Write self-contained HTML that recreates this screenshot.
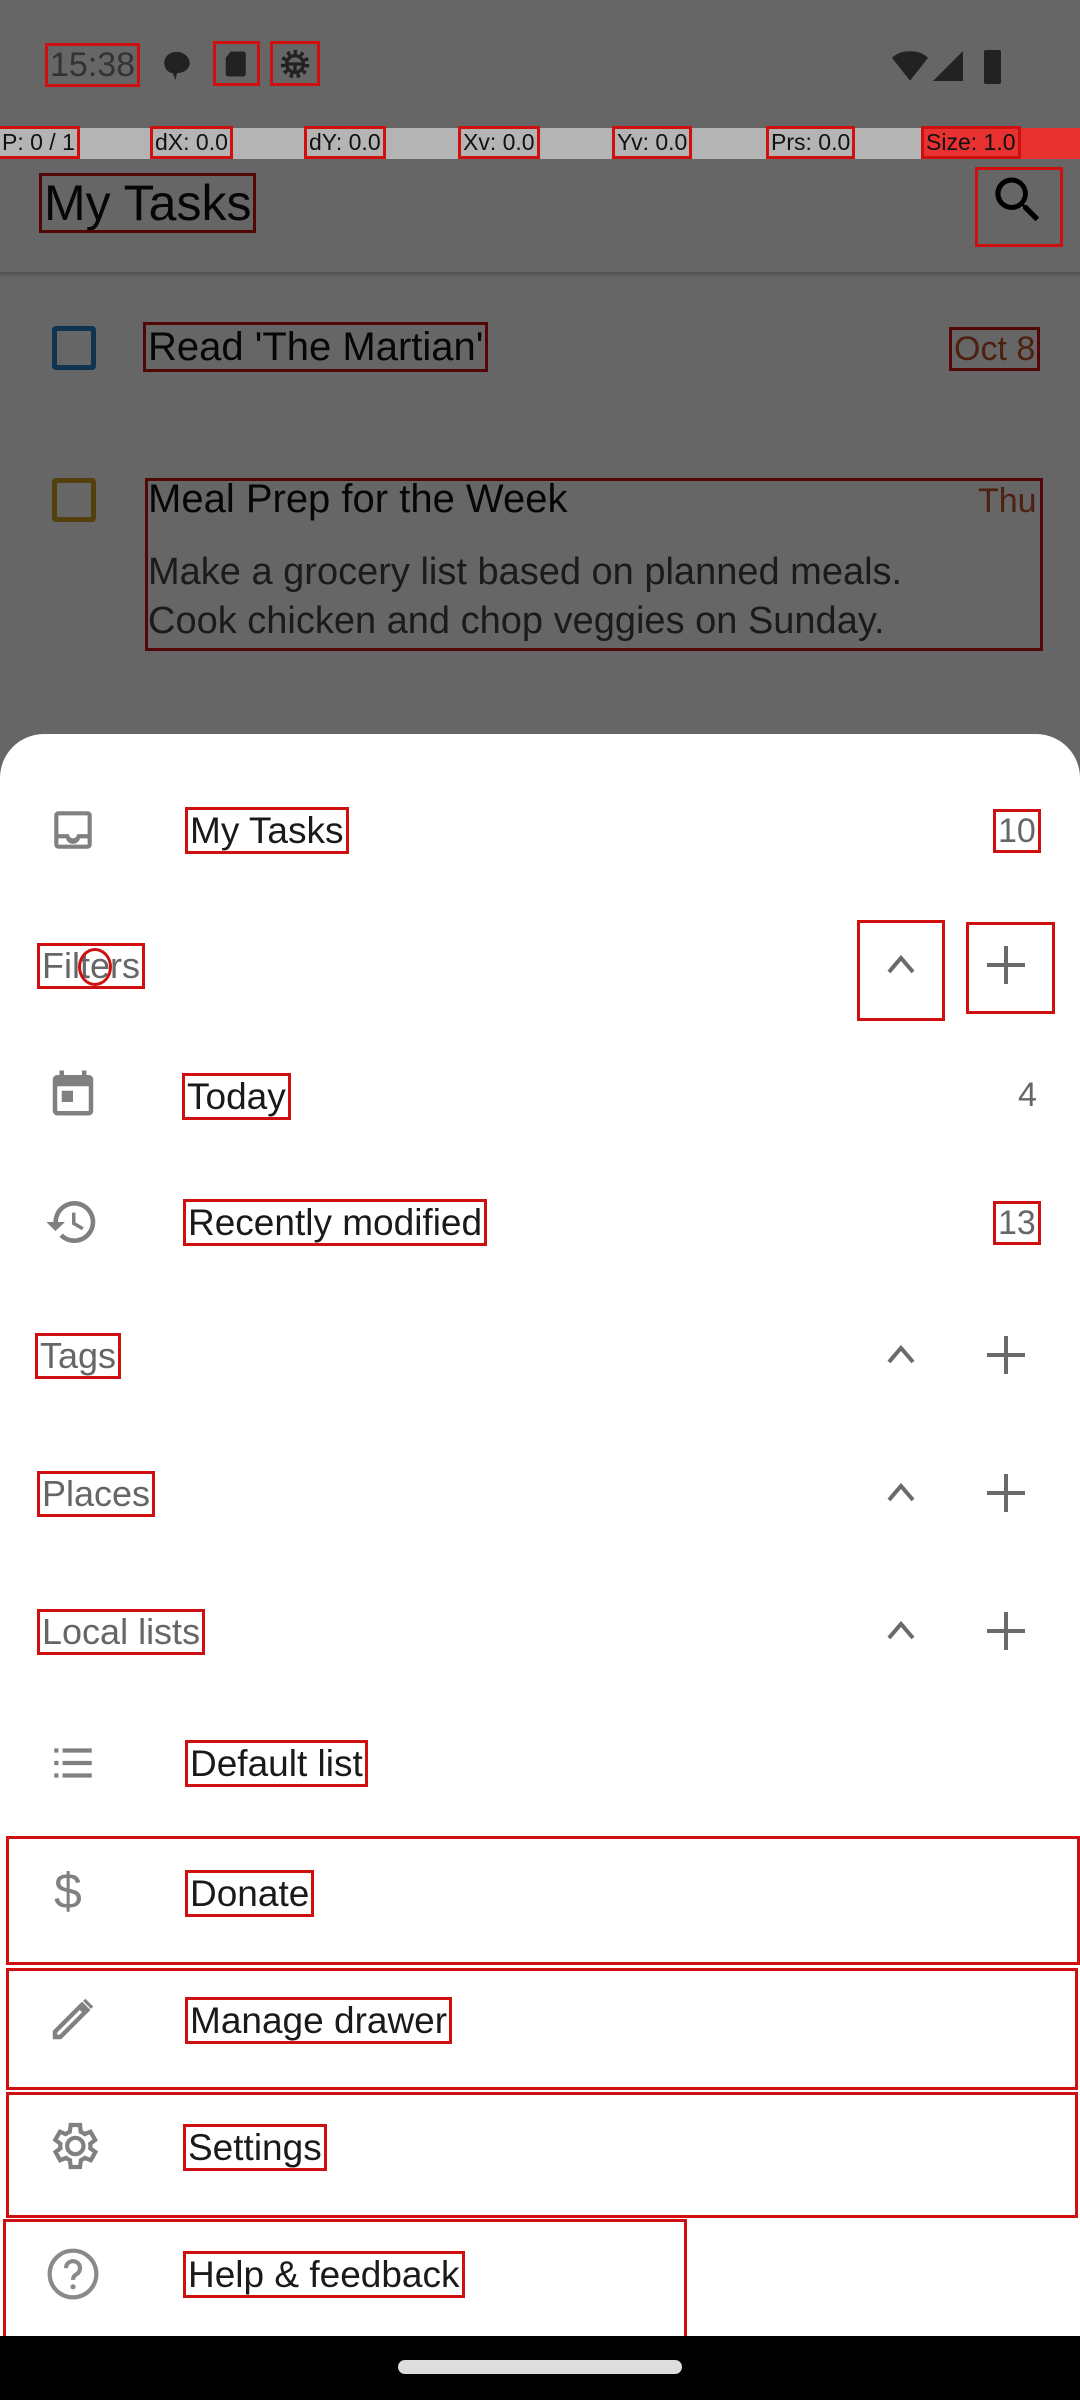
<!DOCTYPE html>
<html><head><meta charset="utf-8"><style>
*{margin:0;padding:0;box-sizing:border-box}
body{width:1080px;height:2400px;position:relative;overflow:hidden;background:#fff;font-family:"Liberation Sans",sans-serif}
.a{position:absolute;white-space:nowrap;line-height:1}
.r{outline:3px solid #d01010;outline-offset:2px}
.ov{position:absolute;left:0;top:0;width:1080px;height:2400px;background:rgba(0,0,0,0.6)}
.lbl{font-size:37px;color:#1a1a1a}
.hdr{font-size:36px;color:#666}
.cnt{font-size:34px;color:#666}
.box{position:absolute;border:3px solid #d01010}
</style></head><body>
<!-- background app -->
<div class="a r" style="left:44px;top:178px;font-size:50px;color:#111">My Tasks</div>
<svg class="a" style="left:988px;top:170px" width="60" height="60" viewBox="0 0 24 24"><path d="M15.5 14h-.8l-.3-.3A6.5 6.5 0 1 0 9.5 16a6.5 6.5 0 0 0 4.2-1.6l.3.3v.8l5 5 1.5-1.5-5-5zm-6 0a4.5 4.5 0 1 1 0-9 4.5 4.5 0 0 1 0 9z" fill="#000"/></svg>
<div class="a" style="left:0;top:272px;width:1080px;height:6px;background:linear-gradient(#ccc,#fff)"></div>
<div class="a" style="left:52px;top:326px;width:44px;height:44px;border:5px solid #2a7fc8;border-radius:4px"></div>
<div class="a r" style="left:148px;top:327px;font-size:40px;color:#111">Read 'The Martian'</div>
<div class="a r" style="left:954px;top:332px;font-size:34px;color:#c0502a">Oct 8</div>
<div class="a" style="left:52px;top:478px;width:44px;height:44px;border:5px solid #d0a020;border-radius:4px"></div>
<div class="box" style="left:145px;top:478px;width:898px;height:173px"></div>
<div class="a" style="left:148px;top:479px;font-size:40px;color:#111">Meal Prep for the Week</div>
<div class="a" style="left:978px;top:484px;font-size:34px;color:#c0502a">Thu</div>
<div class="a" style="left:148px;top:548px;font-size:38px;color:#444;line-height:49px">Make a grocery list based on planned meals.<br>Cook chicken and chop veggies on Sunday.</div>
<div class="ov"></div>
<div class="box" style="left:975px;top:167px;width:88px;height:80px"></div>
<!-- status bar -->
<div class="a r" style="left:50px;top:48px;font-size:34px;color:#333">15:38</div>
<svg class="a" style="left:160px;top:48px" width="34" height="36" viewBox="0 0 24 24"><path d="M12 2C6 2 3 6 3 10s3 7 6 7l2 5 1-5c5 0 9-3 9-7s-4-8-9-8z" fill="#222"/></svg>
<div class="box" style="left:213px;top:41px;width:47px;height:45px"></div>
<svg class="a" style="left:222px;top:48px" width="30" height="32" viewBox="0 0 24 24"><path d="M7 2h10a2 2 0 0 1 2 2v16a2 2 0 0 1-2 2H5a2 2 0 0 1-2-2V7z" fill="#222"/></svg>
<div class="box" style="left:270px;top:41px;width:50px;height:45px"></div>
<svg class="a" style="left:275px;top:44px" width="40" height="40" viewBox="0 0 24 24"><circle cx="12" cy="12" r="7" fill="none" stroke="#222" stroke-width="3" stroke-dasharray="2 2"/><circle cx="12" cy="12" r="5" fill="none" stroke="#222" stroke-width="2"/><path d="M7 12h10M12 12v5" stroke="#222" stroke-width="2"/></svg>
<svg class="a" style="left:890px;top:48px" width="40" height="36" viewBox="0 0 24 22"><path d="M12 20 1 6C4 3 8 2 12 2s8 1 11 4z" fill="#222"/></svg>
<svg class="a" style="left:930px;top:48px" width="36" height="36" viewBox="0 0 24 24"><path d="M22 2v20H2z" fill="#222"/></svg>
<div class="a" style="left:984px;top:50px;width:17px;height:34px;background:#222;border-radius:2px"></div>
<!-- debug bar -->
<div class="a" style="left:0;top:128px;width:1080px;height:31px;background:#b4b4b4"></div>
<div class="a" style="left:923px;top:128px;width:157px;height:31px;background:#e83232"></div>
<div class="a" style="left:0;top:131px;width:1080px;font-size:23px;color:#111">
<span class="a r" style="left:2px">P: 0 / 1</span><span class="a r" style="left:155px">dX: 0.0</span><span class="a r" style="left:309px">dY: 0.0</span><span class="a r" style="left:463px">Xv: 0.0</span><span class="a r" style="left:617px">Yv: 0.0</span><span class="a r" style="left:771px">Prs: 0.0</span><span class="a r" style="left:926px">Size: 1.0</span></div>
<!-- sheet -->
<div class="a" style="left:0;top:734px;width:1080px;height:1610px;background:#fff;border-radius:44px 44px 0 0"></div>
<!-- My Tasks -->
<svg class="a" style="left:48px;top:805px" width="50" height="50" viewBox="0 0 24 24"><path d="M19 3H5a2 2 0 0 0-2 2v14a2 2 0 0 0 2 2h14a2 2 0 0 0 2-2V5a2 2 0 0 0-2-2zm0 16H5v-3h3.6a3.5 3.5 0 0 0 6.8 0H19zm0-5h-5a2 2 0 0 1-4 0H5V5h14z" fill="#808080"/></svg>
<div class="a lbl r" style="left:190px;top:812px">My Tasks</div>
<div class="a cnt r" style="left:998px;top:814px">10</div>
<!-- Filters -->
<div class="a hdr r" style="left:42px;top:948px">Filters</div>
<div class="a" style="left:78px;top:948px;width:34px;height:38px;border:3px solid #d01010;border-radius:50%"></div>
<div class="box" style="left:857px;top:920px;width:88px;height:101px"></div>
<div class="box" style="left:966px;top:922px;width:89px;height:92px"></div>
<!-- Today -->
<svg class="a" style="left:46px;top:1066px" width="54" height="54" viewBox="0 0 24 24"><path d="M19 4h-1V2h-2v2H8V2H6v2H5a2 2 0 0 0-2 2v14a2 2 0 0 0 2 2h14a2 2 0 0 0 2-2V6a2 2 0 0 0-2-2zm0 16H5V9h14zM7 11h5v5H7z" fill="#808080"/></svg>
<div class="a lbl r" style="left:187px;top:1078px">Today</div>
<div class="a cnt" style="left:1018px;top:1078px">4</div>
<!-- Recently modified -->
<svg class="a" style="left:44px;top:1194px" width="56" height="56" viewBox="0 0 24 24"><path d="M13 3a9 9 0 0 0-9 9H1l3.9 3.9L9 12H6a7 7 0 1 1 2.05 4.95l-1.42 1.42A9 9 0 1 0 13 3zm-1 5v5l4.25 2.52.77-1.28-3.52-2.09V8z" fill="#808080"/></svg>
<div class="a lbl r" style="left:188px;top:1204px">Recently modified</div>
<div class="a cnt r" style="left:998px;top:1206px">13</div>
<!-- section headers -->
<div class="a hdr r" style="left:40px;top:1338px">Tags</div>
<div class="a hdr r" style="left:42px;top:1476px">Places</div>
<div class="a hdr r" style="left:42px;top:1614px">Local lists</div>
<!-- chevrons & plus -->
<svg class="a" style="left:0;top:0" width="1080" height="2400">
<g stroke="#6a6a6a" stroke-width="4" fill="none">
<path d="M889 972l12-14 12 14M1006 946v38M987 965h38"/>
<path d="M889 1362l12-14 12 14M1006 1336v38M987 1355h38"/>
<path d="M889 1500l12-14 12 14M1006 1474v38M987 1493h38"/>
<path d="M889 1638l12-14 12 14M1006 1612v38M987 1631h38"/>
</g></svg>
<!-- Default list -->
<svg class="a" style="left:48px;top:1740px" width="50" height="46" viewBox="0 0 24 22"><path d="M3 4h2v2H3zm4 0h14v2H7zM3 10h2v2H3zm4 0h14v2H7zM3 16h2v2H3zm4 0h14v2H7z" fill="#808080"/></svg>
<div class="a lbl r" style="left:190px;top:1745px">Default list</div>
<!-- Donate -->
<div class="box" style="left:6px;top:1836px;width:1074px;height:129px"></div>
<div class="a" style="left:54px;top:1866px;font-size:50px;color:#808080">$</div>
<div class="a lbl r" style="left:190px;top:1875px">Donate</div>
<!-- Manage drawer -->
<div class="box" style="left:6px;top:1968px;width:1072px;height:122px"></div>
<svg class="a" style="left:46px;top:1992px" width="54" height="54" viewBox="0 0 24 24"><path d="M3 21v-3.75L16 4.25 19.75 8 6.75 21zm2-2h1l10-10-1-1L5 18zM17.5 3l3.5 3.5-1 1L16.5 4z" fill="#808080"/></svg>
<div class="a lbl r" style="left:190px;top:2002px">Manage drawer</div>
<!-- Settings -->
<div class="box" style="left:6px;top:2092px;width:1072px;height:126px"></div>
<svg class="a" style="left:45px;top:2118px" width="56" height="56" viewBox="0 0 24 24"><path d="M19.4 13a7.5 7.5 0 0 0 0-2l2.1-1.6-2-3.5-2.5 1a7 7 0 0 0-1.7-1L15 3h-4l-.4 2.9a7 7 0 0 0-1.7 1l-2.5-1-2 3.5L6.6 11a7.5 7.5 0 0 0 0 2l-2.1 1.6 2 3.5 2.5-1a7 7 0 0 0 1.7 1L11 21h4l.4-2.9a7 7 0 0 0 1.7-1l2.5 1 2-3.5zM13 15.5a3.5 3.5 0 1 1 0-7 3.5 3.5 0 0 1 0 7z" fill="none" stroke="#808080" stroke-width="1.8"/></svg>
<div class="a lbl r" style="left:188px;top:2129px">Settings</div>
<!-- Help -->
<div class="box" style="left:3px;top:2219px;width:684px;height:121px"></div>
<svg class="a" style="left:45px;top:2246px" width="56" height="56" viewBox="0 0 24 24"><circle cx="12" cy="12" r="10" fill="none" stroke="#8a8a8a" stroke-width="1.8"/><path d="M9 9.5a3 3 0 1 1 4.5 2.6c-1 .6-1.5 1.2-1.5 2.4" fill="none" stroke="#8a8a8a" stroke-width="1.8"/><circle cx="12" cy="17.5" r="1.1" fill="#8a8a8a"/></svg>
<div class="a lbl r" style="left:188px;top:2256px">Help &amp; feedback</div>
<!-- nav bar -->
<div class="a" style="left:0;top:2336px;width:1080px;height:64px;background:#000"></div>
<div class="a" style="left:398px;top:2360px;width:284px;height:14px;background:#ddd;border-radius:7px"></div>
</body></html>
